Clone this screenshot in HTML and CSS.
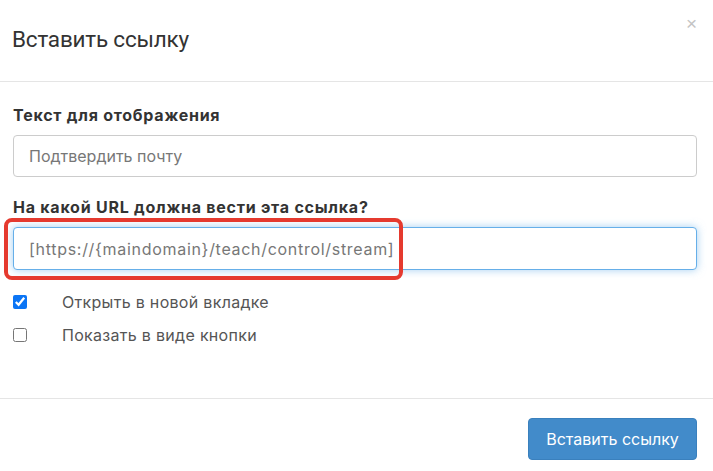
FILE: index.html
```html
<!DOCTYPE html>
<html lang="ru">
<head>
    <meta charset="UTF-8">
    <meta name="viewport" content="width=device-width, initial-scale=1.0">
    <title>Вставить ссылку</title>
    <link rel="stylesheet" href="styles.css">
</head>
<body>
    <div class="modal">
        <!-- Header -->
        <div class="modal-header">
            <h4 class="modal-title">Вставить ссылку</h4>
            <button class="close" type="button">&times;</button>
        </div>

        <!-- Body -->
        <div class="modal-body">
            <div class="form-group">
                <label class="field-label" for="linkText">Текст для отображения</label>
                <input type="text" class="form-control" id="linkText" value="Подтвердить почту">
            </div>

            <div class="form-group url-group">
                <label class="field-label" for="linkUrl">На какой URL должна вести эта ссылка?</label>
                <input type="text" class="form-control focused" id="linkUrl" value="[https://{maindomain}/teach/control/stream]">
                <div class="highlight"></div>
            </div>

            <div class="checkbox">
                <input type="checkbox" id="newTab" checked>
                <label for="newTab">Открыть в новой вкладке</label>
            </div>
            <div class="checkbox">
                <input type="checkbox" id="asButton">
                <label for="asButton">Показать в виде кнопки</label>
            </div>
        </div>

        <!-- Footer -->
        <div class="modal-footer">
            <button class="btn-primary" type="button">Вставить ссылку</button>
        </div>
    </div>
</body>
</html>
```

FILE: styles.css
```css
/* General Styles */
body {
    margin: 0;
    padding: 0;
    background: #fff;
    font-family: 'Inter', 'Noto Sans', sans-serif;
    color: #333;
    overflow: hidden;
}

.modal {
    width: 713px;
    height: 471px;
    display: flex;
    flex-direction: column;
}

/* Header */
.modal-header {
    height: 81px;
    border-bottom: 1px solid #e5e5e5;
    display: flex;
    justify-content: space-between;
    align-items: flex-start;
    padding: 0 16px 0 12px;
}

.modal-title {
    margin: 26px 0 0 0;
    font-family: 'Roboto', 'Liberation Sans', sans-serif;
    font-weight: 400;
    font-size: 22.5px;
    line-height: 26px;
    color: #333;
    letter-spacing: -0.2px;
}

.close {
    margin-top: 14px;
    padding: 0;
    border: none;
    background: none;
    font-family: 'Liberation Sans', sans-serif;
    font-size: 19px;
    line-height: 20px;
    color: #c4c4c4;
    cursor: pointer;
}

/* Body */
.modal-body {
    padding: 23px 16px 0 13px;
    height: 293px;
}

.form-group {
    margin-bottom: 20px;
}

.url-group {
    position: relative;
    margin-bottom: 15px;
}

.field-label {
    display: block;
    font-size: 16px;
    font-weight: 700;
    line-height: 20px;
    letter-spacing: 0.75px;
    color: #333;
    margin-bottom: 10px;
}

.form-control {
    display: block;
    width: 100%;
    height: 42px;
    box-sizing: border-box;
    padding: 0 15px;
    border: 1px solid #ccc;
    border-radius: 4px;
    font-family: 'Inter', 'Noto Sans', sans-serif;
    font-size: 16px;
    color: #777;
    background: #fff;
    outline: none;
}

.form-control.focused {
    height: 43px;
    border-color: #66afe9;
    box-shadow: 0 0 8px rgba(102, 175, 233, 0.6);
    letter-spacing: 0.7px;
}

/* Red annotation frame */
.highlight {
    position: absolute;
    left: -9px;
    top: 21px;
    width: 399px;
    height: 62px;
    box-sizing: border-box;
    border: 4px solid #e53a2f;
    border-radius: 8px;
    pointer-events: none;
}

/* Checkboxes */
.checkbox {
    display: flex;
    align-items: center;
    height: 33px;
}

.checkbox input {
    width: 14px;
    height: 14px;
    margin: 0;
    accent-color: #0b75f5;
}

.checkbox label {
    margin-left: 35px;
    font-size: 16px;
    letter-spacing: 0.3px;
    color: #555;
}

/* Footer */
.modal-footer {
    border-top: 1px solid #e5e5e5;
    display: flex;
    justify-content: flex-end;
    padding: 19px 16px 0 0;
}

.btn-primary {
    width: 169px;
    height: 42px;
    background-color: #428bca;
    border: 1px solid #3a80bd;
    border-radius: 4px;
    color: #fff;
    font-family: 'Inter', 'Noto Sans', sans-serif;
    font-size: 16px;
    cursor: pointer;
}
```
